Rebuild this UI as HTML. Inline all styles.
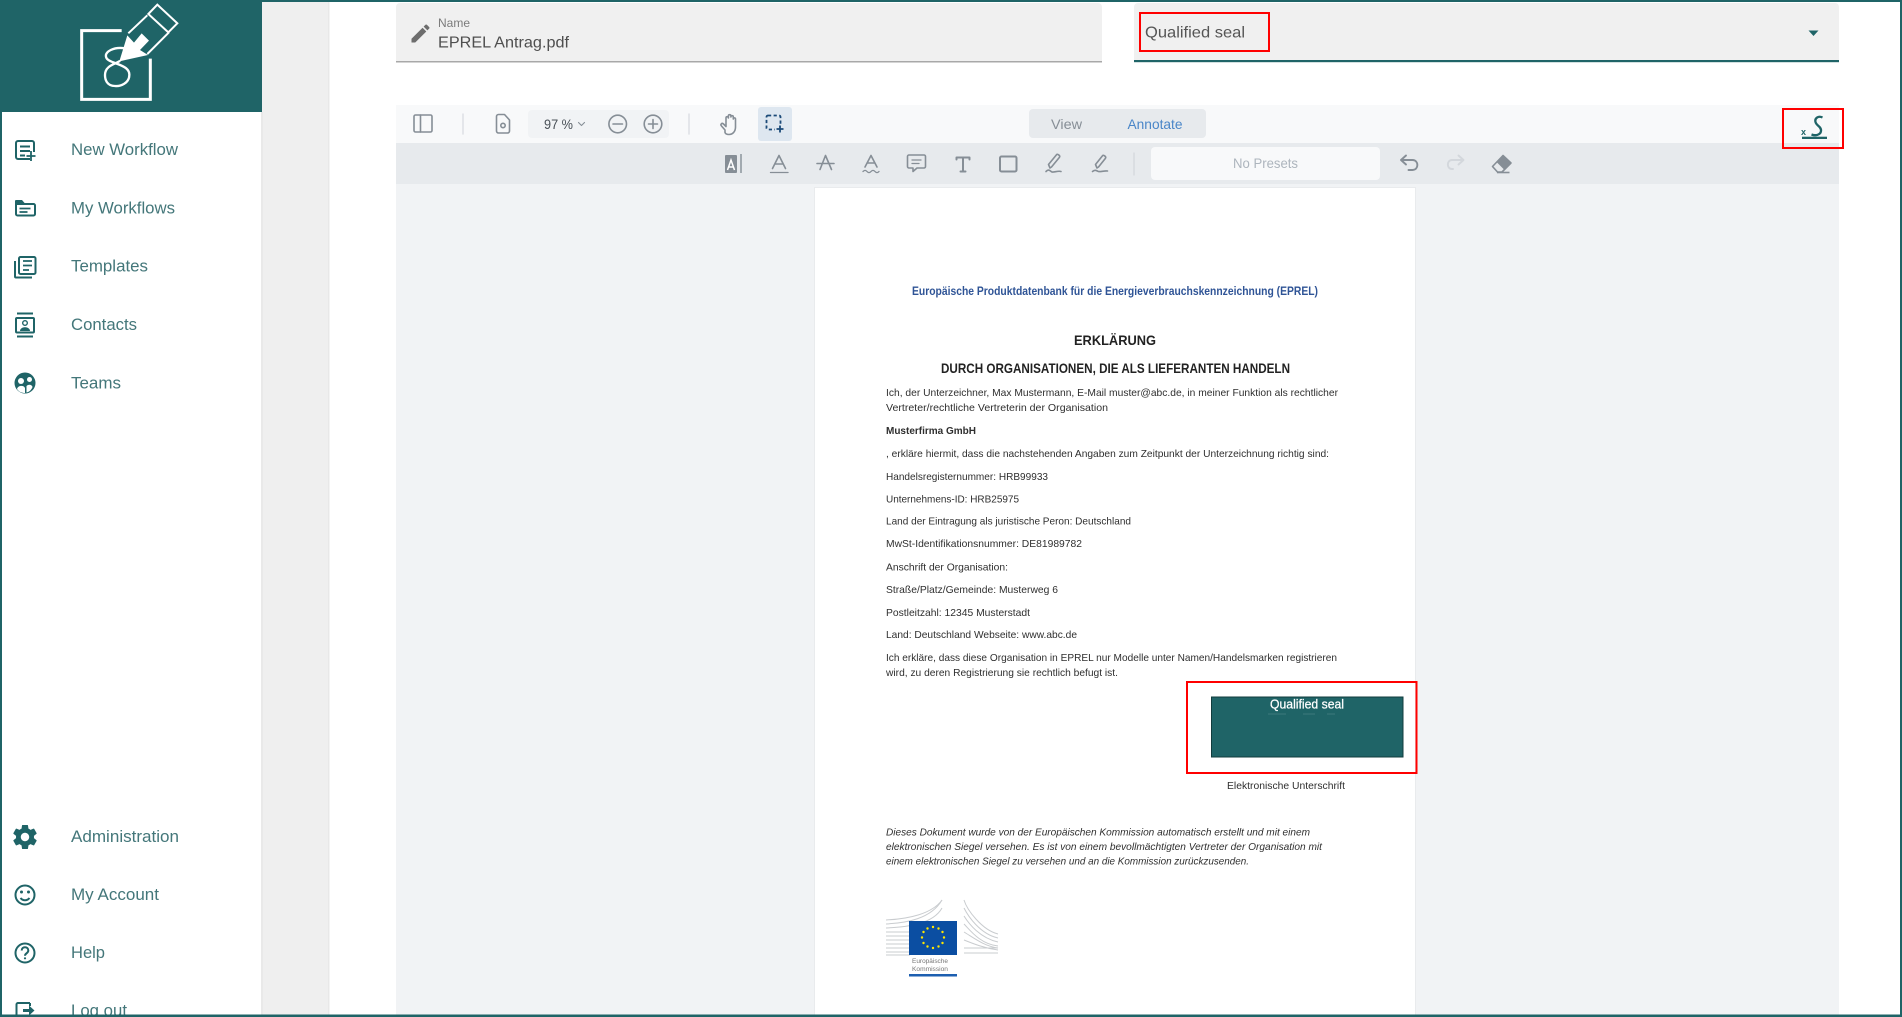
<!DOCTYPE html>
<html lang="en">
<head>
<meta charset="utf-8">
<title>Workflow document</title>
<style>
html,body{margin:0;padding:0;width:1902px;height:1017px;overflow:hidden;background:#fff}
svg{display:block;position:absolute;left:0;top:0}
text{font-family:"Liberation Sans",sans-serif}
.nav{font-size:16.5px;fill:#44777a}
.ni{fill:none;stroke:#1f6467;stroke-width:2}
.t{fill:none;stroke:#868e96;stroke-width:1.6;stroke-linecap:round;stroke-linejoin:round}
.d{font-size:10.5px;fill:#2f2f2f}
.soft{filter:blur(.35px)}
</style>
</head>
<body>
<svg width="1902" height="1017" viewBox="0 0 1902 1017" xmlns="http://www.w3.org/2000/svg">
  <!-- backgrounds -->
  <rect width="1902" height="1017" fill="#fff"/>
  <rect x="262" y="0" width="67" height="1017" fill="#efefef"/>
  <rect x="261" y="112" width="2" height="905" fill="#e9e9e9"/>
  <rect x="328" y="0" width="1.500" height="1017" fill="#e8e8e8"/>

  <!-- sidebar header -->
  <rect x="0" y="0" width="262" height="112" fill="#1f6467"/>
  <g transform="translate(70 0) scale(.3333)" fill="none" stroke="#fff" stroke-width="7">
    <path d="M155 92H35V298H241V176" stroke-width="9"/>
    <path d="M235 42L262 14L322 70L295 97Z" stroke-width="6"/>
    <path d="M175 100L232 46M297 97L232 162" stroke-width="6"/>
    <path d="M148 184L172 106L192 128L215 100L237 122L210 150L234 165Z" fill="#fff" stroke="none"/>
    <path d="M165 145C130 140 105 155 108 170C110 192 180 190 178 225C178 250 150 260 135 258C110 258 105 238 105 225C105 195 140 192 150 182"/>
  </g>

  <!-- nav top -->
  <g>
    <g class="ni">
      <path d="M30 159H18a2 2 0 0 1-2-2V143a2 2 0 0 1 2-2h14a2 2 0 0 1 2 2v9"/>
      <path d="M20 146.500h10M20 151h10M20 155.500h5"/>
      <path d="M31 152v10M26.500 157h9" stroke-width="1.800" transform="translate(0 -1)"/>
    </g>
    <text class="nav" x="71" y="155" textLength="107" lengthAdjust="spacingAndGlyphs">New Workflow</text>

    <g class="ni">
      <path d="M16 204v10a1.500 1.500 0 0 0 1.500 1.500h16a1.500 1.500 0 0 0 1.500-1.500v-8.500a1.500 1.500 0 0 0-1.500-1.500H16z"/>
      <path d="M15 204v-3a1 1 0 0 1 1-1h6l3 3.500z" fill="#1f6467" stroke="none"/>
      <path d="M19.500 208.500h11M19.500 212h8" stroke-width="1.800"/>
    </g>
    <text class="nav" x="71" y="213.300" textLength="104" lengthAdjust="spacingAndGlyphs">My Workflows</text>

    <g class="ni">
      <rect x="19" y="257" width="16.500" height="17" rx="1.500"/>
      <path d="M15 261v15.500a1 1 0 0 0 1 1h16"/>
      <path d="M23 261h9M23 265.500h9M23 270h6" stroke-width="1.800"/>
    </g>
    <text class="nav" x="71" y="271.700" textLength="77" lengthAdjust="spacingAndGlyphs">Templates</text>

    <g class="ni">
      <path d="M17 313.500h16M17 336.500h16"/>
      <rect x="16" y="318" width="18" height="14.500" rx="1"/>
      <circle cx="25" cy="323" r="2.300" stroke-width="1.400"/>
      <path d="M20 331c0-5 10-5 10 0z" fill="#1f6467" stroke="none"/>
    </g>
    <text class="nav" x="71" y="330" textLength="66" lengthAdjust="spacingAndGlyphs">Contacts</text>

    <circle cx="25" cy="383" r="10.500" fill="#1f6467"/>
    <circle cx="21" cy="381" r="3" fill="#fff"/>
    <circle cx="29.500" cy="379.500" r="2.500" fill="#fff"/>
    <path d="M17 389c1-4 7-4 8-1v5c-3 0-6-1-8-4zM26.500 386c2-2 5.500-1.500 6 1-1 3-3.500 5-6 5.500z" fill="#fff"/>
    <text class="nav" x="71" y="388.300" textLength="50" lengthAdjust="spacingAndGlyphs">Teams</text>
  </g>

  <!-- nav bottom -->
  <g>
    <path transform="translate(10.600 822.600) scale(1.200)" fill="#1f6467" d="M19.430 12.980c.04-.32.07-.64.07-.98s-.03-.66-.07-.98l2.110-1.650c.19-.15.24-.42.12-.64l-2-3.460c-.12-.22-.39-.3-.61-.22l-2.490 1c-.52-.4-1.080-.73-1.690-.98l-.38-2.650C14.460 2.180 14.250 2 14 2h-4c-.25 0-.46.18-.49.42l-.38 2.650c-.61.25-1.170.59-1.690.98l-2.490-1c-.23-.09-.49 0-.61.22l-2 3.460c-.13.22-.07.49.12.64l2.110 1.650c-.04.32-.07.65-.07.98s.03.66.07.98l-2.110 1.650c-.19.15-.24.42-.12.64l2 3.460c.12.22.39.3.61.22l2.490-1c.52.4 1.080.73 1.690.98l.38 2.650c.03.24.24.42.49.42h4c.25 0 .46-.18.49-.42l.38-2.650c.61-.25 1.170-.59 1.690-.98l2.490 1c.23.09.49 0 .61-.22l2-3.460c.12-.22.07-.49-.12-.64l-2.110-1.650zM12 15.500c-1.930 0-3.500-1.570-3.500-3.500s1.570-3.500 3.500-3.500 3.500 1.570 3.500 3.500-1.570 3.500-3.500 3.500z"/>
    <text class="nav" x="71" y="842" textLength="108" lengthAdjust="spacingAndGlyphs">Administration</text>

    <circle class="ni" cx="25" cy="895" r="9.500"/>
    <circle cx="21.500" cy="892" r="1.500" fill="#1f6467"/>
    <circle cx="28.500" cy="892" r="1.500" fill="#1f6467"/>
    <path class="ni" d="M20.500 898c2.500 3 6.500 3 9 0"/>
    <text class="nav" x="71" y="900" textLength="88" lengthAdjust="spacingAndGlyphs">My Account</text>

    <circle class="ni" cx="25" cy="953" r="9.500"/>
    <path class="ni" d="M21.700 950.500c0-4.400 6.600-4.400 6.600 0 0 2.800-3.300 2.800-3.300 5.200" stroke-width="1.800"/>
    <circle cx="25" cy="958.300" r="1.100" fill="#1f6467"/>
    <text class="nav" x="71" y="958" textLength="34" lengthAdjust="spacingAndGlyphs">Help</text>

    <path class="ni" d="M30 1003h-12a1.500 1.500 0 0 0-1.500 1.500v13M30 1003v3"/>
    <path d="M23 1009h6v-3.500l5.500 5-5.500 5v-3.500h-6z" fill="#1f6467"/>
    <text class="nav" x="71" y="1016" textLength="56" lengthAdjust="spacingAndGlyphs">Log out</text>
  </g>

  <!-- form fields -->
  <path d="M396 62V7a4 4 0 0 1 4-4h698a4 4 0 0 1 4 4v55z" fill="#f0f0f0"/>
  <rect x="396" y="61" width="706" height="1.500" fill="#a8a8a8"/>
  <path transform="translate(408.500 21.500) scale(1)" fill="#6d6d6d" d="M3 17.250V21h3.750L17.810 9.940l-3.750-3.750L3 17.250zM20.710 7.040c.39-.39.39-1.020 0-1.410l-2.340-2.340c-.39-.39-1.020-.39-1.410 0l-1.830 1.830 3.750 3.750 1.830-1.830z"/>
  <text x="438" y="27" font-size="12" fill="#7b7b7b" textLength="32" lengthAdjust="spacingAndGlyphs">Name</text>
  <text x="438" y="47.500" font-size="16" fill="#4e4e4e" textLength="131" lengthAdjust="spacingAndGlyphs">EPREL Antrag.pdf</text>

  <path d="M1134 62V7a4 4 0 0 1 4-4h697a4 4 0 0 1 4 4v55z" fill="#f0f0f0"/>
  <rect x="1134" y="60" width="705" height="2.200" fill="#1f6467"/>
  <text x="1145" y="37.500" font-size="16" fill="#555" textLength="100" lengthAdjust="spacingAndGlyphs">Qualified seal</text>
  <path d="M1808.500 30.500h10l-5 5.500z" fill="#1f6467"/>
  <rect x="1140" y="13" width="129" height="38" fill="none" stroke="#f00" stroke-width="2"/>

  <!-- viewer -->
  <rect x="396" y="105" width="1443" height="38" fill="#f8f9fa"/>
  <rect x="396" y="143" width="1443" height="41" fill="#e7eaed"/>
  <rect x="396" y="184" width="1443" height="833" fill="#f1f3f5"/>

  <!-- toolbar row 1 -->
  <g class="t">
    <rect x="414" y="115" width="18" height="17" rx="1.500"/>
    <path d="M420.500 115v17"/>
    <path d="M463 114v20M689 114v20" stroke="#dfe2e6"/>
    <path d="M498.500 114.500h6l5 5.500v11a2 2 0 0 1-2 2h-9a2 2 0 0 1-2-2v-14.500a2 2 0 0 1 2-2z"/>
    <circle cx="503" cy="125.500" r="2.200"/>
  </g>
  <rect x="528" y="110" width="141" height="28" rx="4" fill="#f1f3f5"/>
  <text x="544" y="129" font-size="14" fill="#495057" textLength="29" lengthAdjust="spacingAndGlyphs">97 %</text>
  <g class="t">
    <path d="M578.500 122.500l3 3 3-3" stroke-width="1.100"/>
    <circle cx="617.700" cy="124" r="8.800"/>
    <path d="M613 124h9.500"/>
    <circle cx="653" cy="124" r="8.800"/>
    <path d="M648.500 124h9M653 119.500v9"/>
    <path d="M725 130l-3.500-4c-1.500-1.700.5-3.500 2-2l2.500 2.500v-8.500c0-1.700 2.400-1.700 2.400 0v-2c0-1.700 2.500-1.700 2.500 0v1c0-1.700 2.400-1.700 2.400 0v2c0-1.500 2.200-1.500 2.200 0v8c0 4.500-2.800 7.500-6.500 7.500-2 0-3.500-.6-4-2z"/>
  </g>
  <rect x="758" y="107" width="34" height="34" rx="3" fill="#dee7f0"/>
  <rect x="766.500" y="115.500" width="14" height="14" rx="1.500" fill="none" stroke="#1b4a78" stroke-width="1.800" stroke-dasharray="3.200 2.400"/>
  <rect x="775" y="124.500" width="10" height="9" fill="#dee7f0"/>
  <path d="M780 125.500v7M776.500 129h7" stroke="#1b4a78" stroke-width="1.800" fill="none"/>
  <rect x="1029" y="109" width="177" height="29" rx="4" fill="#e7eaed"/>
  <text x="1051" y="129" font-size="14" fill="#868e96" textLength="31" lengthAdjust="spacingAndGlyphs">View</text>
  <text x="1127.500" y="129" font-size="14" fill="#4a86c8" textLength="55" lengthAdjust="spacingAndGlyphs">Annotate</text>

  <!-- signature button -->
  <text x="1801" y="135" font-size="9" font-weight="bold" fill="#1f6467">x</text>
  <path d="M1822.500 117.500C1818.500 115.500 1814.500 118 1815.500 122C1816.500 126 1821.500 126.500 1821 131C1820.500 135 1815.500 136 1811.500 134.500" fill="none" stroke="#1f6467" stroke-width="2.300"/>
  <rect x="1802" y="136.700" width="25" height="2.300" fill="#1f6467"/>
  <rect x="1783" y="109" width="60" height="39" fill="none" stroke="#f00" stroke-width="2"/>

  <!-- toolbar row 2 -->
  <rect x="725" y="155" width="12" height="18" rx="1" fill="#868e96"/>
  <path d="M727.500 170l3.500-10 3.500 10M728.500 167h5" fill="none" stroke="#fff" stroke-width="1.500"/>
  <path d="M741 154v19" stroke="#868e96" stroke-width="1.400"/>
  <g class="t">
    <path d="M772.500 168.500L779 155.500l6.500 13M775 164h8"/>
    <path d="M770.500 172.500h17.500" stroke-width="1.300"/>
    <path d="M820 169.500L825.500 155.500l6 14M817 163.500h17" />
    <path d="M865 167L871 155.500l6 11.500M867 163h8"/>
    <path d="M863 171.500c1.500-1.500 2.700-1.500 4 0s2.700 1.500 4 0 2.700-1.500 4 0 2.700 1.500 4 0" stroke-width="1.300"/>
    <path d="M909 155h15a1.500 1.500 0 0 1 1.500 1.500v10a1.500 1.500 0 0 1-1.500 1.500h-7l-4 3.500V168h-4a1.500 1.500 0 0 1-1.500-1.500v-10a1.500 1.500 0 0 1 1.500-1.500z"/>
    <path d="M912 160h9M912 163.500h7" stroke-width="1.300"/>
    <path d="M956.500 159.500v-2h13v2M963 157.500v14M960.500 171.500h5" stroke-width="2"/>
    <rect x="1000" y="156.500" width="16.500" height="15" rx="1.500" stroke-width="2"/>
    <path d="M1050 168l-1.500-3.500 8-9.800c1-1.200 4 1 3 2.500l-8 9.800z"/>
    <path d="M1046 171.500c3-3 4-.5 6 .5 2 .6 6-1.500 9-.5" />
    <path d="M1097 168l-1.500-3.500 7-8.800c1-1.200 4 1 3 2.500l-7 8.800z" />
    <path d="M1092.500 171.500c3-2.500 4-.5 6 0 2 .5 6-1 9-.5"/>
    <path d="M1134 153v22" stroke="#d3d7dc" stroke-width="1.200"/>
    <path d="M1406 155.500l-5 4.500 5 4.500M1401 160h11.500c6.500 0 6.500 10 0 10h-4" stroke-width="1.900"/>
    <path d="M1458.500 155.500l5 4.500-5 4.500M1463 160h-11c-5.500 0-5.500 9 0 9h1" stroke="#d3d7dc" stroke-width="1.900"/>
  </g>
  <rect x="1151" y="147" width="229" height="33" rx="4" fill="#f8f9fa"/>
  <text x="1233" y="168" font-size="14" fill="#adb5bd" textLength="65" lengthAdjust="spacingAndGlyphs">No Presets</text>
  <path d="M1503 155.500L1511 163L1502 172H1497.500L1492.500 166.500Z" fill="#e7eaed" stroke="#868e96" stroke-width="1.600" stroke-linejoin="round"/>
  <path d="M1503 155.500L1511 163L1504.500 170L1496.500 162Z" fill="#868e96"/>
  <path d="M1497 172.500h12.500" stroke="#868e96" stroke-width="1.600"/>

  <!-- document page -->
  <rect x="814" y="187" width="602" height="830" fill="#e9ebed"/>
  <rect x="815" y="188" width="600" height="829" fill="#fff"/>
  <g class="soft">
    <text x="912" y="295" font-size="11.500" font-weight="bold" fill="#2f5496" textLength="406" lengthAdjust="spacingAndGlyphs">Europäische Produktdatenbank für die Energieverbrauchskennzeichnung (EPREL)</text>
    <text x="1074" y="345" font-size="14" font-weight="bold" fill="#222" textLength="82" lengthAdjust="spacingAndGlyphs">ERKLÄRUNG</text>
    <text x="941" y="373" font-size="14" font-weight="bold" fill="#222" textLength="349" lengthAdjust="spacingAndGlyphs">DURCH ORGANISATIONEN, DIE ALS LIEFERANTEN HANDELN</text>
    <text class="d" x="886" y="396" textLength="452" lengthAdjust="spacingAndGlyphs">Ich, der Unterzeichner, Max Mustermann, E-Mail muster@abc.de, in meiner Funktion als rechtlicher</text>
    <text class="d" x="886" y="411" textLength="222" lengthAdjust="spacingAndGlyphs">Vertreter/rechtliche Vertreterin der Organisation</text>
    <text class="d" x="886" y="434" font-weight="bold" textLength="90" lengthAdjust="spacingAndGlyphs">Musterfirma GmbH</text>
    <text class="d" x="886" y="457" textLength="443" lengthAdjust="spacingAndGlyphs">, erkläre hiermit, dass die nachstehenden Angaben zum Zeitpunkt der Unterzeichnung richtig sind:</text>
    <text class="d" x="886" y="480" textLength="162" lengthAdjust="spacingAndGlyphs">Handelsregisternummer: HRB99933</text>
    <text class="d" x="886" y="502.500" textLength="133" lengthAdjust="spacingAndGlyphs">Unternehmens-ID: HRB25975</text>
    <text class="d" x="886" y="524.500" textLength="245" lengthAdjust="spacingAndGlyphs">Land der Eintragung als juristische Peron: Deutschland</text>
    <text class="d" x="886" y="547" textLength="196" lengthAdjust="spacingAndGlyphs">MwSt-Identifikationsnummer: DE81989782</text>
    <text class="d" x="886" y="570.500" textLength="122" lengthAdjust="spacingAndGlyphs">Anschrift der Organisation:</text>
    <text class="d" x="886" y="593" textLength="172" lengthAdjust="spacingAndGlyphs">Straße/Platz/Gemeinde: Musterweg 6</text>
    <text class="d" x="886" y="616" textLength="144" lengthAdjust="spacingAndGlyphs">Postleitzahl: 12345 Musterstadt</text>
    <text class="d" x="886" y="638" textLength="191" lengthAdjust="spacingAndGlyphs">Land: Deutschland Webseite: www.abc.de</text>
    <text class="d" x="886" y="661" textLength="451" lengthAdjust="spacingAndGlyphs">Ich erkläre, dass diese Organisation in EPREL nur Modelle unter Namen/Handelsmarken registrieren</text>
    <text class="d" x="886" y="676" textLength="232" lengthAdjust="spacingAndGlyphs">wird, zu deren Registrierung sie rechtlich befugt ist.</text>
    <text class="d" x="1227" y="789" textLength="118" lengthAdjust="spacingAndGlyphs">Elektronische Unterschrift</text>
    <text class="d" x="886" y="835.500" font-style="italic" textLength="424" lengthAdjust="spacingAndGlyphs">Dieses Dokument wurde von der Europäischen Kommission automatisch erstellt und mit einem</text>
    <text class="d" x="886" y="850" font-style="italic" textLength="436" lengthAdjust="spacingAndGlyphs">elektronischen Siegel versehen. Es ist von einem bevollmächtigten Vertreter der Organisation mit</text>
    <text class="d" x="886" y="864.500" font-style="italic" textLength="363" lengthAdjust="spacingAndGlyphs">einem elektronischen Siegel zu versehen und an die Kommission zurückzusenden.</text>
  </g>

  <!-- seal -->
  <rect x="1211.500" y="697" width="191.500" height="60" fill="#1f6467" stroke="#123c3e" stroke-width="1"/>
  <text x="1270" y="708.500" font-size="12.500" fill="#fff" stroke="#fff" stroke-width=".25" textLength="74" lengthAdjust="spacingAndGlyphs">Qualified seal</text>
  <path d="M1268 714h18M1303 714h12M1327 714h8" stroke="#5d8f91" stroke-width=".5"/>
  <rect x="1187" y="682" width="229.500" height="91" fill="none" stroke="#f00" stroke-width="2"/>

  <!-- EU logo -->
  <g class="soft">
    <g fill="none" stroke="#c9cccf" stroke-width="1">
      <path d="M886 924c20-1 45-5 56-24M886 928c22-1 47-4 56-20M886 932h24M886 936h24M886 940h24M886 944h24M886 948h24M886 952h24M886 955h24"/>
      <path d="M886 920c22-1 46-6 56-20"/>
      <path d="M964 900c3 10 18 30 34 34M964 908c4 8 16 26 34 30M964 916c5 8 16 22 34 26M964 924c6 6 16 20 34 22M964 932c10 6 20 14 34 16M964 940c10 4 20 8 34 10M964 948h34M964 953h34"/>
    </g>
    <rect x="909" y="921" width="48" height="34" fill="#0b4ea2"/>
    <g fill="#ffe600">
      <circle cx="933" cy="927" r="1.200"/><circle cx="938.500" cy="928.500" r="1.200"/><circle cx="942.500" cy="932" r="1.200"/><circle cx="944" cy="937.500" r="1.200"/><circle cx="942.500" cy="943" r="1.200"/><circle cx="938.500" cy="946.500" r="1.200"/><circle cx="933" cy="948" r="1.200"/><circle cx="927.500" cy="946.500" r="1.200"/><circle cx="923.500" cy="943" r="1.200"/><circle cx="922" cy="937.500" r="1.200"/><circle cx="923.500" cy="932" r="1.200"/><circle cx="927.500" cy="928.500" r="1.200"/>
    </g>
    <text x="912" y="963" font-size="6" fill="#777" textLength="36" lengthAdjust="spacingAndGlyphs">Europäische</text>
    <text x="912" y="971" font-size="6" fill="#777" textLength="36" lengthAdjust="spacingAndGlyphs">Kommission</text>
    <rect x="909" y="974" width="48" height="2.500" fill="#1d5fb0"/>
  </g>

  <!-- window frame -->
  <rect x="0" y="0" width="1902" height="2" fill="#1f6467"/>
  <rect x="0" y="0" width="2" height="1017" fill="#1f6467"/>
  <rect x="1900" y="0" width="2" height="1017" fill="#1f6467"/>
  <rect x="0" y="1014.500" width="1902" height="2.500" fill="#1f6467"/>
</svg>
</body>
</html>
